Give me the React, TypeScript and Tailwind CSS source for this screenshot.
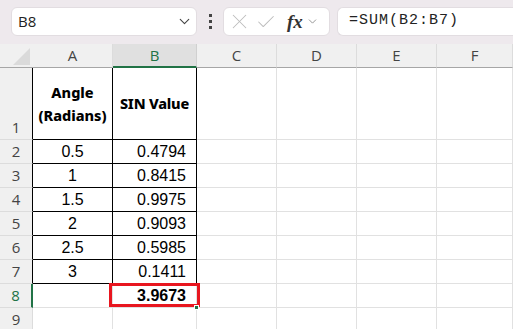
import { ChevronDown, X, Check } from "lucide-react";

const cols = ["A", "B", "C", "D", "E", "F"];

const data: [string, string][] = [
  ["0.5", "0.4794"],
  ["1", "0.8415"],
  ["1.5", "0.9975"],
  ["2", "0.9093"],
  ["2.5", "0.5985"],
  ["3", "0.1411"],
];

const grid = "border-r border-b border-[#e1e1e1]";
const boxed = "border-r border-b border-black";

const Toolbar = () => (
  <div className="h-[44px] bg-[#eee9ed] flex items-start pt-[7px] pl-[11px] gap-[7px]">
    {/* Name box */}
    <div className="w-[186px] h-[29px] bg-white rounded-[6px] border border-[#e2dde1] flex items-center justify-between pl-[6px] pr-[3px]">
      <span className="text-[15px] text-[#222] font-['Open_Sans',sans-serif]">B8</span>
      <ChevronDown className="w-[17px] h-[17px] text-[#444]" strokeWidth={1.6} />
    </div>
    {/* kebab */}
    <div className="w-[12px] h-[29px] flex flex-col items-center justify-center gap-[3px]">
      <span className="w-[3px] h-[3px] bg-[#444]" />
      <span className="w-[3px] h-[3px] bg-[#444]" />
      <span className="w-[3px] h-[3px] bg-[#444]" />
    </div>
    {/* function buttons */}
    <div className="w-[107px] h-[29px] bg-white rounded-[6px] border border-[#e2dde1] flex items-center pl-[3px]">
      <X className="w-[25px] h-[25px] text-[#bcbcbc]" strokeWidth={1} />
      <Check className="w-[22px] h-[22px] text-[#bcbcbc] ml-[3px]" strokeWidth={1.1} />
      <span className="ml-[10px] text-[19px] italic text-[#333] font-['Liberation_Serif',serif] leading-none font-semibold">
        fx
      </span>
      <ChevronDown className="w-[13px] h-[13px] text-[#888] ml-[3px]" strokeWidth={1.6} />
    </div>
    {/* formula */}
    <div className="flex-1 h-[29px] bg-white rounded-l-[6px] border border-r-0 border-[#e2dde1] flex items-center pl-[11px]">
      <span className="text-[15px] tracking-[1px] text-[#222] font-['Liberation_Mono',monospace]">=SUM(B2:B7)</span>
    </div>
  </div>
);

const Sheet = () => {
  const cell = "font-['Liberation_Sans',Arial,sans-serif] text-[16px] text-black flex items-center";
  const rowHead = "bg-[#f0f0f0] text-[15px] text-[#444] font-['Open_Sans',sans-serif] flex justify-center border-b border-[#dcdcdc]";
  return (
    <div className="grid grid-cols-[33px_80px_84px_80px_80px_80px_76px] grid-rows-[24px_72px_repeat(8,24px)]">
      {/* corner */}
      <div className="bg-[#f0f0f0] border-b border-[#a6a6a6] flex items-end justify-end pr-[3px] pb-[2px]">
        <svg width="17" height="17" viewBox="0 0 17 17">
          <polygon points="17,0 17,17 0,17" fill="#dadada" />
        </svg>
      </div>
      {cols.map((c) =>
        c === "B" ? (
          <div key={c} className="bg-[#e0e0e0] border-b-2 border-[#217346] border-r border-r-[#d0d0d0] flex items-center justify-center text-[15px] text-[#217346] font-['Open_Sans',sans-serif]">
            {c}
          </div>
        ) : (
          <div key={c} className="bg-[#f0f0f0] border-b border-[#a6a6a6] border-r border-r-[#dcdcdc] flex items-center justify-center text-[15px] text-[#444] font-['Open_Sans',sans-serif]">
            {c}
          </div>
        )
      )}

      {/* row 1 */}
      <div className={`${rowHead} items-end pb-[1px] border-r border-r-black`}>1</div>
      <div className={`${boxed} flex items-center justify-center text-center font-['Noto_Sans',sans-serif] font-extrabold text-[14.5px] leading-[23px] text-black`}>
        Angle<br />(Radians)
      </div>
      <div className={`${boxed} flex items-center justify-center font-['Noto_Sans',sans-serif] font-extrabold text-[14.5px] text-black tracking-[-0.2px]`}>
        SIN Value
      </div>
      <div className={grid} />
      <div className={grid} />
      <div className={grid} />
      <div className={grid} />

      {data.map(([a, b], i) => (
        <>
          <div key={`h${i}`} className={`${rowHead} items-center border-r border-r-black`}>{i + 2}</div>
          <div key={`a${i}`} className={`${boxed} ${cell} justify-center`}>{a}</div>
          <div key={`b${i}`} className={`${boxed} ${cell} justify-end pr-[10px]`}>{b}</div>
          <div key={`c${i}`} className={grid} />
          <div key={`d${i}`} className={grid} />
          <div key={`e${i}`} className={grid} />
          <div key={`f${i}`} className={grid} />
        </>
      ))}

      {/* row 8 */}
      <div className={`${rowHead} items-center bg-[#e0e0e0] text-[#217346] border-r-2 border-r-[#217346]`}>8</div>
      <div className={grid} />
      <div className={`${grid} relative ${cell} justify-end pr-[10px] font-bold`}>
        3.9673
        <div className="absolute left-[-4px] top-[-1px] w-[91px] h-[24px] border-[3px] border-[#e8161f]" />
        <div className="absolute right-[-3px] bottom-[-3px] w-[5px] h-[5px] bg-[#217346] border border-white" />
      </div>
      <div className={grid} />
      <div className={grid} />
      <div className={grid} />
      <div className={grid} />

      {/* row 9 */}
      <div className={`${rowHead} items-center border-r border-r-[#dcdcdc]`}>9</div>
      <div className={grid} />
      <div className={grid} />
      <div className={grid} />
      <div className={grid} />
      <div className={grid} />
      <div className={grid} />
    </div>
  );
};

export default function App() {
  return (
    <div className="w-[513px] h-[329px] overflow-hidden bg-white">
      <Toolbar />
      <Sheet />
    </div>
  );
}
